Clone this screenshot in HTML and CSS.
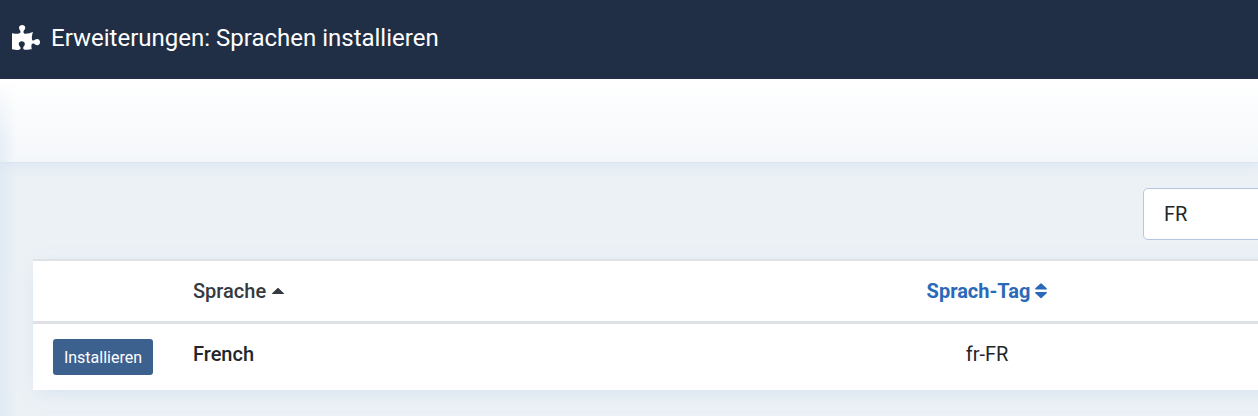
FILE: index.html
```
<!DOCTYPE html>
<html lang="de">

<head>
    <title>Erweiterungen: Sprachen installieren</title>
    <meta charset="utf-8">
    <meta content="width=device-width, initial-scale=1" name="viewport">
    <link rel="stylesheet" href="styles.css">
</head>

<body>
    <header class="header">
        <svg class="header-icon" viewBox="0 0 576 512" aria-hidden="true">
            <path d="M519.442 288.651c-41.519 0-59.5 31.593-82.058 31.593C377.409 320.244 432 144 432 144s-196.288 80-196.288-3.297c0-35.827 36.288-46.25 36.288-85.985C272 19.216 243.885 0 210.539 0c-34.654 0-66.366 18.891-66.366 56.346 0 41.364 31.711 59.277 31.711 81.75C175.885 207.719 0 166.758 0 166.758v333.237s178.635 41.047 178.635-28.662c0-22.473-40-40.107-40-81.471 0-37.456 29.25-56.346 63.577-56.346 33.673 0 61.788 19.216 61.788 54.717 0 39.735-36.288 50.158-36.288 85.985 0 60.803 129.675 25.73 181.23 25.73 0 0-34.725-120.101 25.827-120.101 35.962 0 46.423 36.152 86.308 36.152C556.712 416 576 387.99 576 354.443c0-34.199-18.962-65.792-56.558-65.792z"/>
        </svg>
        <h1 class="page-title">Erweiterungen: Sprachen installieren</h1>
    </header>

    <div class="wrapper">
        <div class="subhead"></div>
        <main class="content">
            <div class="filter-bar">
                <input class="search" type="text" value="FR" aria-label="Suchen">
            </div>
            <table class="table">
                <thead>
                    <tr>
                        <th class="col-action"></th>
                        <th class="col-name">Sprache <svg class="caret caret-up" viewBox="0 0 12 16"><path d="M.5 11h11a.5.5 0 0 0 .3-.8L6.4 5.1a.6.6 0 0 0-.8 0L.2 10.2a.5.5 0 0 0 .3.8z"/></svg></th>
                        <th class="col-tag"><a href="#">Sprach-Tag <svg class="caret" viewBox="0 0 12 16"><path d="M.8 6.5h10.4a.7.7 0 0 0 .5-1.2L6.5.4a.7.7 0 0 0-1 0L.3 5.3a.7.7 0 0 0 .5 1.2zM.8 9h10.4a.7.7 0 0 1 .5 1.2l-5.2 4.9a.7.7 0 0 1-1 0L.3 10.2A.7.7 0 0 1 .8 9z"/></svg></a></th>
                        <th></th>
                    </tr>
                </thead>
                <tbody>
                    <tr>
                        <td><button class="btn" type="button">Installieren</button></td>
                        <td class="name">French</td>
                        <td class="tag">fr-FR</td>
                        <td></td>
                    </tr>
                </tbody>
            </table>
        </main>
    </div>
</body>

</html>
```
FILE: styles.css
```
* {
    box-sizing: border-box;
    margin: 0;
    padding: 0;
}

html,
body {
    height: 100%;
    overflow: hidden;
}

body {
    background: #ebf1f5;
    color: #22262a;
    display: flex;
    flex-direction: column;
    font-family: Roboto, sans-serif;
    font-size: 20px;
    line-height: 30px;
}

.header {
    align-items: center;
    background: #212f46;
    color: #fff;
    display: flex;
    flex: none;
    gap: 11px;
    height: 79px;
    padding: 0 12px 4px;
}

.header-icon {
    fill: #fff;
    height: 25px;
    margin-bottom: 1px;
    width: 28px;
}

.page-title {
    font-size: 24px;
    font-weight: 400;
}

.wrapper {
    flex: 1;
    overflow: hidden;
    position: relative;
}

/* shadow cast by the sidebar */
.wrapper::before {
    background: linear-gradient(to right, rgba(215, 228, 242, .5), rgba(215, 228, 242, 0));
    content: "";
    height: 100%;
    left: 0;
    -webkit-mask-image: linear-gradient(transparent, #000 60px);
    mask-image: linear-gradient(transparent, #000 60px);
    position: absolute;
    top: 0;
    width: 16px;
    z-index: 1;
}

.subhead {
    background: linear-gradient(#fff, #f4f7fa);
    border-bottom: 1px solid #dbe5f0;
    box-shadow: 0 3px 10px rgba(200, 216, 238, .4);
    height: 84px;
}

.content {
    padding: 25px 0 0 33px;
}

.filter-bar {
    display: flex;
    padding-left: 1110px;
}

.search {
    background: #fff;
    border: 1px solid #b4c6e0;
    border-radius: 5px;
    color: #22262a;
    flex: none;
    font: inherit;
    height: 52px;
    padding: 0 20px;
    width: 300px;
}

.table {
    background: #fff;
    border-collapse: separate;
    border-spacing: 0;
    border-top: 2px solid #dee2e6;
    box-shadow: 0 5px 18px -8px rgba(175, 198, 226, .6);
    margin-top: 19px;
    table-layout: fixed;
    width: 1400px;
}

.table th {
    border-bottom: 3px solid #dee2e6;
    font-weight: 500;
    height: 63px;
    padding: 0 20px;
    text-align: left;
}

.table td {
    height: 66px;
    padding: 15px 20px;
    vertical-align: top;
}

.table .col-action {
    width: 140px;
}

.table .col-name {
    color: #343a40;
    width: 704px;
}

.table .col-tag {
    font-weight: 700;
    text-align: center;
    width: 220px;
}

.col-tag a {
    color: #2a69b8;
    text-decoration: none;
}

.caret {
    fill: currentColor;
    height: 16px;
    vertical-align: -1px;
    width: 12px;
}

.caret-up {
    margin-left: .7px;
}

.name {
    font-weight: 500;
}

.table .tag {
    text-align: center;
}

.btn {
    background: #3d618f;
    border: 0;
    border-radius: 3px;
    color: #fff;
    display: block;
    font: 400 16px/36px Roboto, sans-serif;
    height: 36px;
    padding-top: 1px;
    width: 100px;
}
```
